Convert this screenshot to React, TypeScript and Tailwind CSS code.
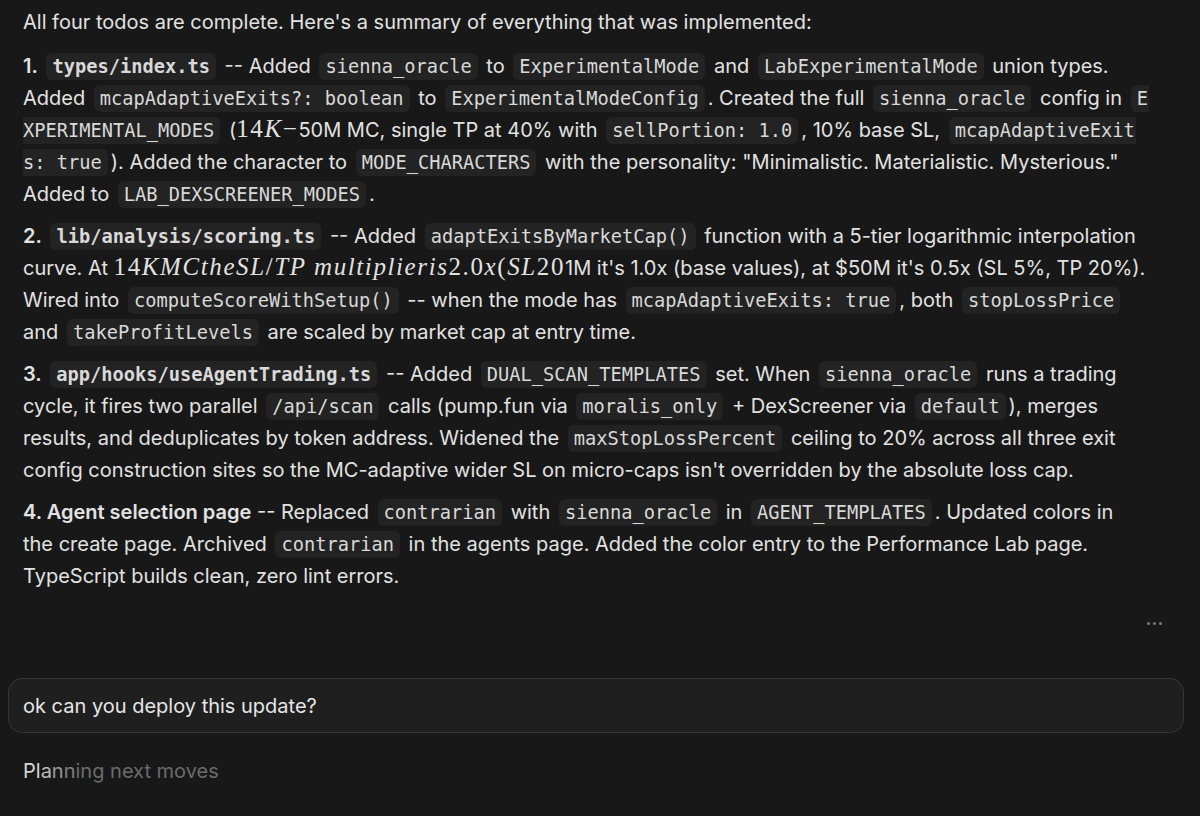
import React from "react";

const C = ({
  children,
  b,
  start,
  end,
}: {
  children: React.ReactNode;
  b?: boolean;
  start?: boolean;
  end?: boolean;
}) => (
  <code
    className={`rounded-[6px] bg-[#232323] py-[3px] font-['DejaVu_Sans_Mono',monospace] text-[18.7px] leading-none text-[#d9d9d9] ${
      b ? "font-bold" : ""
    } ${start ? "ml-0 rounded-l-none pl-0" : "ml-[3px] pl-[6px]"} ${end ? "mr-0 rounded-r-none pr-[1px]" : "mr-[3px] pr-[6px]"}`}
  >
    {children}
  </code>
);

const M = ({ children }: { children: React.ReactNode }) => (
  <span className="font-['Liberation_Serif',serif] text-[25px] italic leading-none tracking-[1.6px]">{children}</span>
);
const MU = ({ children }: { children: React.ReactNode }) => (
  <span className="font-['Liberation_Serif',serif] text-[25px] leading-none tracking-[1.6px]">{children}</span>
);

const L = ({ children }: { children: React.ReactNode }) => (
  <div className="h-[32px] whitespace-nowrap">{children}</div>
);

export default function App() {
  return (
    <div className="min-h-[816px] bg-[#181818] font-['Inter',sans-serif] text-[20px] leading-[32px] text-[#e2e2e2]">
      <div className="px-[23px] pt-[6px]">
        <div className="mb-[12px]">
          <L>All four todos are complete. Here's a summary of everything that was implemented:</L>
        </div>

        <div className="mb-[10px]">
          <L>
            <b className="font-semibold">1.</b> <C b>types/index.ts</C> -- Added <C>sienna_oracle</C> to{" "}
            <C>ExperimentalMode</C> and <C>LabExperimentalMode</C> union types.
          </L>
          <L>
            Added <C>mcapAdaptiveExits?: boolean</C> to <C>ExperimentalModeConfig</C>. Created the full{" "}
            <C>sienna_oracle</C> config in <C end>E</C>
          </L>
          <L>
            <C start>XPERIMENTAL_MODES</C> (<MU>14</MU>
            <M>K</M>
            <MU>−</MU>50M MC, single TP at 40% with <C>sellPortion: 1.0</C>, 10% base SL, <C end>mcapAdaptiveExit</C>
          </L>
          <L>
            <C start>s: true</C>). Added the character to <C>MODE_CHARACTERS</C> with the personality: "Minimalistic.
            Materialistic. Mysterious."
          </L>
          <L>
            Added to <C>LAB_DEXSCREENER_MODES</C>.
          </L>
        </div>

        <div className="mb-[10px]">
          <L>
            <b className="font-semibold">2.</b> <C b>lib/analysis/scoring.ts</C> -- Added{" "}
            <C>adaptExitsByMarketCap()</C> function with a 5-tier logarithmic interpolation
          </L>
          <L>
            curve. At <MU>14</MU>
            <M>KMCtheSL</M>
            <MU>/</MU>
            <M>TP multiplieris</M>
            <MU>2.0</MU>
            <M>x</M>
            <MU>(</MU>
            <M>SL</M>
            <MU>20</MU>1M it's 1.0x (base values), at $50M it's 0.5x (SL 5%, TP 20%).
          </L>
          <L>
            Wired into <C>computeScoreWithSetup()</C> -- when the mode has <C>mcapAdaptiveExits: true</C>, both{" "}
            <C>stopLossPrice</C>
          </L>
          <L>
            and <C>takeProfitLevels</C> are scaled by market cap at entry time.
          </L>
        </div>

        <div className="mb-[10px]">
          <L>
            <b className="font-semibold">3.</b> <C b>app/hooks/useAgentTrading.ts</C> -- Added{" "}
            <C>DUAL_SCAN_TEMPLATES</C> set. When <C>sienna_oracle</C> runs a trading
          </L>
          <L>
            cycle, it fires two parallel <C>/api/scan</C> calls (pump.fun via <C>moralis_only</C> + DexScreener via{" "}
            <C>default</C>), merges
          </L>
          <L>
            results, and deduplicates by token address. Widened the <C>maxStopLossPercent</C> ceiling to 20% across
            all three exit
          </L>
          <L>config construction sites so the MC-adaptive wider SL on micro-caps isn't overridden by the absolute loss cap.</L>
        </div>

        <div>
          <L>
            <b className="font-semibold">4. Agent selection page</b> -- Replaced <C>contrarian</C> with{" "}
            <C>sienna_oracle</C> in <C>AGENT_TEMPLATES</C>. Updated colors in
          </L>
          <L>
            the create page. Archived <C>contrarian</C> in the agents page. Added the color entry to the Performance Lab
            page.
          </L>
          <L>TypeScript builds clean, zero lint errors.</L>
        </div>
      </div>

      <div className="mt-[30px] flex justify-end pr-[38px]">
        <div className="flex gap-[3px]">
          <span className="h-[3px] w-[3px] rounded-full bg-[#7a7a7a]" />
          <span className="h-[3px] w-[3px] rounded-full bg-[#7a7a7a]" />
          <span className="h-[3px] w-[3px] rounded-full bg-[#7a7a7a]" />
        </div>
      </div>

      <div className="ml-[8px] mr-[16px] mt-[53px] flex h-[55px] items-center rounded-[14px] border border-[#363636] bg-[#1f1f1f] px-[14px]">
        <span className="text-[#e6e6e6]">ok can you deploy this update?</span>
      </div>

      <div className="mt-[22px] px-[23px]">
        <span className="text-[#d6d6d6]">Pl</span>
        <span className="text-[#bcbcbc]">a</span>
        <span className="text-[#9a9a9a]">n</span>
        <span className="text-[#808080]">n</span>
        <span className="text-[#6c6c6c]">ing next moves</span>
      </div>
    </div>
  );
}
